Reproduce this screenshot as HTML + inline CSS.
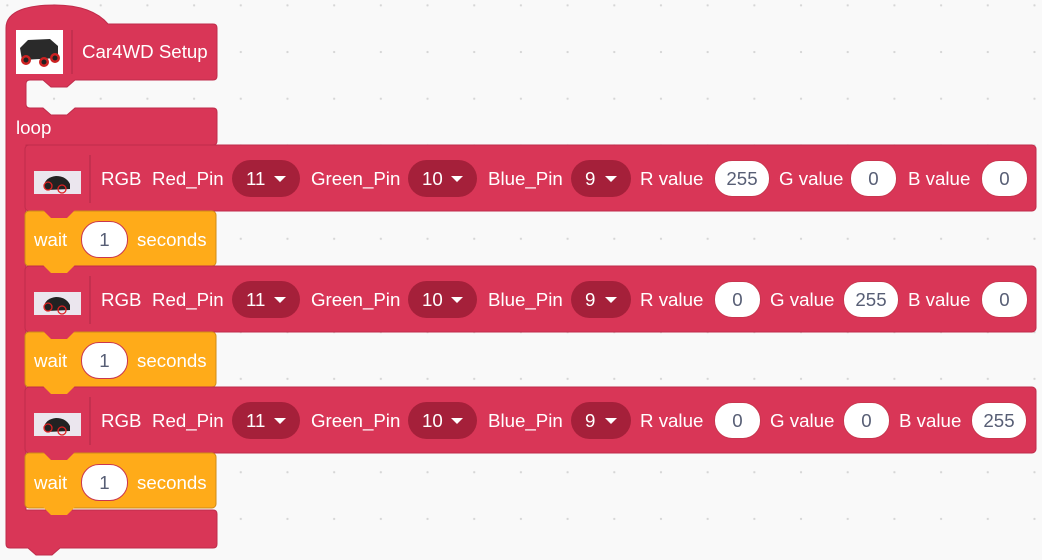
<!DOCTYPE html>
<html><head><meta charset="utf-8"><style>
html,body{margin:0;padding:0;}
body{width:1042px;height:560px;overflow:hidden;position:relative;background-color:#f9f9f9;
background-image:radial-gradient(circle,#d6d6d6 1px,transparent 1.3px);background-size:46.7px 46.7px;background-position:-16px -18px;
font-family:"Liberation Sans",Arial,sans-serif;}
svg{position:absolute;left:0;top:0;}
.t{position:absolute;color:#fff;font-size:18.7px;line-height:20px;white-space:nowrap;}
.dd{position:absolute;height:37px;border-radius:19px;background:#a5203a;color:#fff;font-size:18.7px;line-height:37px;box-sizing:border-box;padding-left:14px;}
.dd:after{content:"";position:absolute;right:14px;top:16px;border-left:6px solid transparent;border-right:6px solid transparent;border-top:6px solid #fff;}
.in{position:absolute;height:35px;border-radius:18px;background:#fff;color:#575e75;font-size:18.7px;line-height:35px;text-align:center;border:1px solid #c9364f;box-sizing:content-box;}
</style></head><body>
<svg width="1042" height="560">
<path d="M6,28 C6,10 30,5 55,5 C80,5 98,12 108,24 L213,24 Q217,24 217,28 L217,76 Q217,80 213,80 L75,80 L67,87 L51,87 L43,80 L30,80 Q26,80 26,84 L26,104 Q26,108 30,108 L43,108 L51,115 L67,115 L75,108 L213,108 Q217,108 217,112 L217,141 Q217,145 213,145 L26,145 L26,510 L213,510 Q217,510 217,514 L217,544 Q217,548 213,548 L60,548 L52,555 L36,555 L28,548 L10,548 Q6,548 6,544 Z" fill="#d93657" stroke="#c02c4b" stroke-width="1"/>
<g stroke="#c02c4b" stroke-width="1">
<rect x="25" y="145" width="1011" height="66" rx="4" fill="#d93657"/>
<rect x="25" y="211" width="191" height="55" rx="4" fill="#ffab19" stroke="#cf8b17"/>
<polygon points="43,210 51,218 67,218 75,210" fill="#d93657" stroke="none"/>
<rect x="25" y="266" width="1011" height="66" rx="4" fill="#d93657"/>
<polygon points="43,265 51,273 67,273 75,265" fill="#ffab19" stroke="none"/>
<rect x="25" y="332" width="191" height="55" rx="4" fill="#ffab19" stroke="#cf8b17"/>
<polygon points="43,331 51,339 67,339 75,331" fill="#d93657" stroke="none"/>
<rect x="25" y="387" width="1011" height="66" rx="4" fill="#d93657"/>
<polygon points="43,386 51,394 67,394 75,386" fill="#ffab19" stroke="none"/>
<rect x="25" y="453" width="191" height="55" rx="4" fill="#ffab19" stroke="#cf8b17"/>
<polygon points="43,452 51,460 67,460 75,452" fill="#d93657" stroke="none"/>
<polygon points="43,507 51,515 67,515 75,507" fill="#ffab19" stroke="none"/>
</g>
<rect x="16" y="30" width="47" height="44" fill="#fff"/>
<path d="M20,48 L28,40 L50,39 L58,46 L58,58 L22,60 Z" fill="#2a2a2a"/>
<circle cx="26" cy="60" r="5" fill="#c22" /><circle cx="44" cy="62" r="5" fill="#c22"/><circle cx="55" cy="58" r="5" fill="#c22"/>
<circle cx="26" cy="60" r="2.5" fill="#222"/><circle cx="44" cy="62" r="2.5" fill="#222"/><circle cx="55" cy="58" r="2.5" fill="#222"/>
<line x1="72" y1="30" x2="72" y2="74" stroke="#b02a47"/>
<g id="ic">
<rect x="34" y="171" width="47" height="23" fill="#ebe6ee"/>
<path d="M44,185 Q46,177 56,176 Q66,176 70,184 L70,189 L46,190 Z" fill="#222"/>
<circle cx="48" cy="186" r="4" fill="none" stroke="#d22" stroke-width="1.3"/>
<circle cx="62" cy="189" r="4" fill="none" stroke="#d22" stroke-width="1.3"/>
<line x1="90" y1="155" x2="90" y2="203" stroke="#b02a47"/>
</g>
<use href="#ic" y="121"/>
<use href="#ic" y="242"/>
</svg>
<div class="t" style="left:82px;top:42px;">Car4WD Setup</div>
<div class="t" style="left:16px;top:118px;">loop</div>

<div class="t" style="left:101px;top:169px;">RGB</div><div class="t" style="left:152px;top:169px;">Red_Pin</div>
<div class="dd" style="left:232px;top:160px;width:68px;">11</div>
<div class="t" style="left:311px;top:169px;">Green_Pin</div>
<div class="dd" style="left:408px;top:160px;width:69px;">10</div>
<div class="t" style="left:488px;top:169px;">Blue_Pin</div>
<div class="dd" style="left:571px;top:160px;width:60px;">9</div>
<div class="t" style="left:640px;top:169px;">R value</div>
<div class="in" style="left:714px;top:160px;width:54px;">255</div>
<div class="t" style="left:779px;top:169px;">G value</div>
<div class="in" style="left:850px;top:160px;width:45px;">0</div>
<div class="t" style="left:908px;top:169px;">B value</div>
<div class="in" style="left:981px;top:160px;width:45px;">0</div>

<div class="t" style="left:34px;top:230px;">wait</div>
<div class="in" style="left:81px;top:221px;width:45px;">1</div>
<div class="t" style="left:137px;top:230px;">seconds</div>

<div class="t" style="left:101px;top:290px;">RGB</div><div class="t" style="left:152px;top:290px;">Red_Pin</div>
<div class="dd" style="left:232px;top:281px;width:68px;">11</div>
<div class="t" style="left:311px;top:290px;">Green_Pin</div>
<div class="dd" style="left:408px;top:281px;width:69px;">10</div>
<div class="t" style="left:488px;top:290px;">Blue_Pin</div>
<div class="dd" style="left:571px;top:281px;width:60px;">9</div>
<div class="t" style="left:640px;top:290px;">R value</div>
<div class="in" style="left:714px;top:281px;width:45px;">0</div>
<div class="t" style="left:770px;top:290px;">G value</div>
<div class="in" style="left:843px;top:281px;width:54px;">255</div>
<div class="t" style="left:908px;top:290px;">B value</div>
<div class="in" style="left:981px;top:281px;width:45px;">0</div>

<div class="t" style="left:34px;top:351px;">wait</div>
<div class="in" style="left:81px;top:342px;width:45px;">1</div>
<div class="t" style="left:137px;top:351px;">seconds</div>

<div class="t" style="left:101px;top:411px;">RGB</div><div class="t" style="left:152px;top:411px;">Red_Pin</div>
<div class="dd" style="left:232px;top:402px;width:68px;">11</div>
<div class="t" style="left:311px;top:411px;">Green_Pin</div>
<div class="dd" style="left:408px;top:402px;width:69px;">10</div>
<div class="t" style="left:488px;top:411px;">Blue_Pin</div>
<div class="dd" style="left:571px;top:402px;width:60px;">9</div>
<div class="t" style="left:640px;top:411px;">R value</div>
<div class="in" style="left:714px;top:402px;width:45px;">0</div>
<div class="t" style="left:770px;top:411px;">G value</div>
<div class="in" style="left:843px;top:402px;width:45px;">0</div>
<div class="t" style="left:899px;top:411px;">B value</div>
<div class="in" style="left:971px;top:402px;width:54px;">255</div>

<div class="t" style="left:34px;top:473px;">wait</div>
<div class="in" style="left:81px;top:464px;width:45px;">1</div>
<div class="t" style="left:137px;top:473px;">seconds</div>
</body></html>
